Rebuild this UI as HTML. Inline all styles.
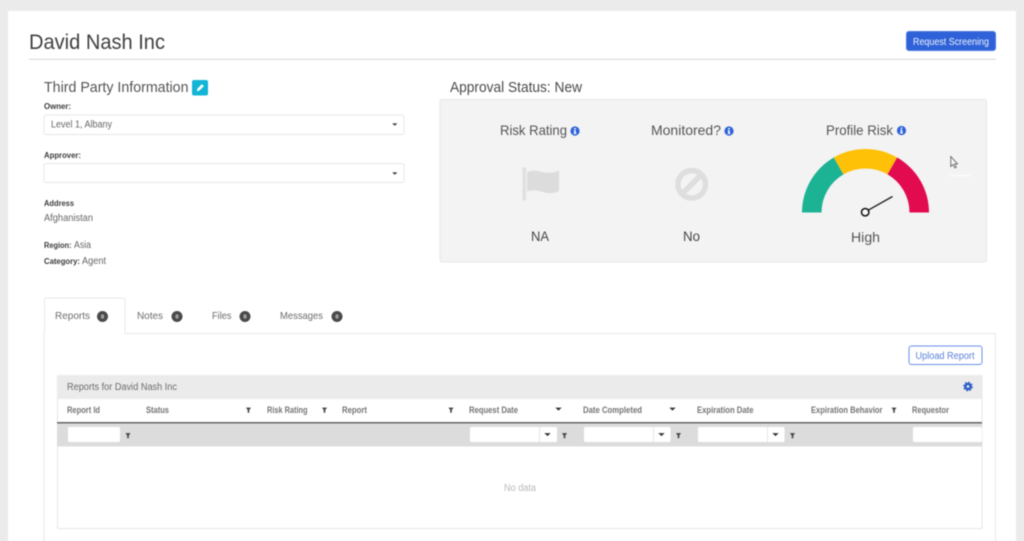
<!DOCTYPE html>
<html><head><meta charset="utf-8"><title>David Nash Inc</title>
<style>
html,body{margin:0;padding:0;width:1024px;height:541px;overflow:hidden;background:#ebebeb}
svg{display:block;filter:blur(.5px)}
text{font-family:"Liberation Sans",sans-serif;fill:#555}
.b{font-weight:bold;fill:#3c3c3c}
.h{font-weight:bold;fill:#747474;font-size:9.2px}
</style></head><body>
<svg width="1024" height="541" viewBox="0 0 1024 541" xmlns="http://www.w3.org/2000/svg">
<defs>
<g id="fn"><path d="M-2.600-2.400H2.600L.8 0V2.800H-.8V0Z" fill="#444"/></g>
<g id="ct"><path d="M-3.200-1.400H3.200L0 1.600Z" fill="#333"/></g>
<g id="inf"><circle r="4.600" fill="#2f62d8"/><rect x="-.8" y="-3" width="1.600" height="1.500" fill="#fff"/><path d="M-1.300-.8H.8V2H1.400V3H-1.400V2H-.8V.1H-1.300Z" fill="#fff"/></g>
<g id="bd"><circle r="5.500" fill="#4a4a4a"/><text y="2" text-anchor="middle" style="font-size:5.500px;fill:#eee;font-weight:bold">0</text></g>
</defs>
<rect width="1024" height="541" fill="#ebebeb"/>
<rect x="8" y="11" width="1008" height="530" fill="#fff"/>

<text x="29" y="49" style="font-size:21px;fill:#404040" textLength="136" lengthAdjust="spacingAndGlyphs">David Nash Inc</text>
<rect x="29" y="58.500" width="967" height="1.500" fill="#e4e4e4"/>
<rect x="906.500" y="31.500" width="89" height="19" rx="2.500" fill="#2f62d8" stroke="#4a78e0"/>
<text x="913" y="45" style="font-size:10px;fill:#eef2fc" textLength="76" lengthAdjust="spacingAndGlyphs">Request Screening</text>

<text x="44" y="92" style="font-size:14.500px" textLength="144.500" lengthAdjust="spacingAndGlyphs">Third Party Information</text>
<rect x="192" y="80" width="16" height="15.500" rx="2" fill="#12b5d6"/>
<path d="M196.800 91.200l.7-2.700 4.400-4.400 2 2-4.400 4.400z" fill="#fff"/>

<text class="b" x="44" y="109" style="font-size:8.700px" textLength="27" lengthAdjust="spacingAndGlyphs">Owner:</text>
<rect x="44" y="115" width="360" height="19.500" rx="2" fill="#fff" stroke="#e6e6e6"/>
<text x="51" y="127.500" style="font-size:10px;fill:#666" textLength="61" lengthAdjust="spacingAndGlyphs">Level 1, Albany</text>
<use href="#ct" transform="translate(394.800 124.500) scale(.8)"/>
<text class="b" x="44" y="158" style="font-size:8.700px" textLength="37" lengthAdjust="spacingAndGlyphs">Approver:</text>
<rect x="44" y="163.500" width="360" height="19" rx="2" fill="#fff" stroke="#e6e6e6"/>
<use href="#ct" transform="translate(394.800 173.500) scale(.8)"/>
<text class="b" x="44" y="206" style="font-size:8.700px" textLength="30" lengthAdjust="spacingAndGlyphs">Address</text>
<text x="44" y="221" style="font-size:10px;fill:#666" textLength="49" lengthAdjust="spacingAndGlyphs">Afghanistan</text>
<text class="b" x="44" y="248" style="font-size:8.700px" textLength="27.500" lengthAdjust="spacingAndGlyphs">Region:</text>
<text x="74" y="248" style="font-size:10px;fill:#666" textLength="17" lengthAdjust="spacingAndGlyphs">Asia</text>
<text class="b" x="44" y="264" style="font-size:8.700px" textLength="36" lengthAdjust="spacingAndGlyphs">Category:</text>
<text x="82" y="264" style="font-size:10px;fill:#666" textLength="24" lengthAdjust="spacingAndGlyphs">Agent</text>

<text x="450" y="92" style="font-size:14.500px;fill:#4a4a4a" textLength="132" lengthAdjust="spacingAndGlyphs">Approval Status: New</text>
<rect x="440" y="99.500" width="546.500" height="162.500" rx="2" fill="#f3f3f3" stroke="#e6e6e6"/>
<text x="500" y="135" style="font-size:14px" textLength="67" lengthAdjust="spacingAndGlyphs">Risk Rating</text>
<use href="#inf" transform="translate(575 131)"/>
<text x="651" y="135" style="font-size:14px" textLength="70" lengthAdjust="spacingAndGlyphs">Monitored?</text>
<use href="#inf" transform="translate(729 131)"/>
<text x="826" y="135" style="font-size:14px" textLength="67" lengthAdjust="spacingAndGlyphs">Profile Risk</text>
<use href="#inf" transform="translate(901.500 130.500)"/>

<rect x="522.500" y="169" width="3.500" height="31.500" rx="1.700" fill="#e0e0e0"/><circle cx="524.200" cy="169.500" r="2.300" fill="#e0e0e0"/>
<path d="M527 172c6-2 10-1.500 15 0s11 1 17-1.200v20.500c-6 2.500-11 2.200-16 .7s-10-2.500-16-.5z" fill="#dcdcdc"/>
<circle cx="691.700" cy="184.300" r="13.800" fill="none" stroke="#dedede" stroke-width="5.400"/>
<path d="M681.700 194.300l20-20" stroke="#dedede" stroke-width="5.400"/>
<text x="531" y="241" style="font-size:14px;fill:#444" textLength="18" lengthAdjust="spacingAndGlyphs">NA</text>
<text x="683" y="241" style="font-size:14px;fill:#444" textLength="17" lengthAdjust="spacingAndGlyphs">No</text>
<text x="851" y="242" style="font-size:14px;fill:#555" textLength="29" lengthAdjust="spacingAndGlyphs">High</text>

<path d="M802 212.500A63.500 63.500 0 0 1 833.800 157.500L843.500 174.400A44 44 0 0 0 821.500 212.500Z" fill="#1bb394"/>
<path d="M833.800 157.500A63.500 63.500 0 0 1 897.200 157.500L887.500 174.400A44 44 0 0 0 843.500 174.400Z" fill="#ffc107"/>
<path d="M897.200 157.500A63.500 63.500 0 0 1 929 212.500H909.500A44 44 0 0 0 887.500 174.400Z" fill="#e30b4f"/>
<path d="M868 210.300L892.500 196.500" stroke="#222" stroke-width="1.400"/>
<circle cx="865.200" cy="212.200" r="3.700" fill="#f7f7f7" stroke="#111" stroke-width="1.500"/>

<path d="M950.800 156.500V166.500L953 164.500L954.800 168L956.300 167.200L954.600 163.900H957.500Z" fill="#f5f5f5" stroke="#555" stroke-width=".8"/>
<rect x="950" y="175" width="20" height="1" fill="#fff"/>

<path d="M44 541V333H44.500V300a2 2 0 0 1 2-2H123a2 2 0 0 1 2 2V333.500H995.500V541" fill="none" stroke="#e8e8e8"/>
<text x="55" y="319" style="font-size:10.300px;fill:#6c6c6c" textLength="35" lengthAdjust="spacingAndGlyphs">Reports</text>
<use href="#bd" transform="translate(102.500 316.500)"/>
<text x="137" y="319" style="font-size:10.300px;fill:#6c6c6c" textLength="26" lengthAdjust="spacingAndGlyphs">Notes</text>
<use href="#bd" transform="translate(177 316.500)"/>
<text x="212" y="319" style="font-size:10.300px;fill:#6c6c6c" textLength="19.500" lengthAdjust="spacingAndGlyphs">Files</text>
<use href="#bd" transform="translate(245 316.500)"/>
<text x="280" y="319" style="font-size:10.300px;fill:#6c6c6c" textLength="43" lengthAdjust="spacingAndGlyphs">Messages</text>
<use href="#bd" transform="translate(337 316.500)"/>

<rect x="909" y="346" width="73" height="18.500" rx="2.500" fill="#fff" stroke="#6a90e6"/>
<text x="915.500" y="359" style="font-size:10px;fill:#5a80d8" textLength="59" lengthAdjust="spacingAndGlyphs">Upload Report</text>

<rect x="57.500" y="375.500" width="924.500" height="153" fill="#fff" stroke="#e6e6e6"/>
<rect x="57" y="375" width="925" height="24" fill="#ebebeb"/>
<text x="67" y="390" style="font-size:9.800px;fill:#6c6c6c" textLength="110" lengthAdjust="spacingAndGlyphs">Reports for David Nash Inc</text>
<circle cx="968" cy="386.500" r="2.600" fill="none" stroke="#2a5cc8" stroke-width="2.400"/>
<circle cx="968" cy="386.500" r="4.100" fill="none" stroke="#2a5cc8" stroke-width="1.400" stroke-dasharray="1.700 1.520"/>

<text class="h" x="67" y="413" textLength="33" lengthAdjust="spacingAndGlyphs">Report Id</text>
<text class="h" x="146" y="413" textLength="23" lengthAdjust="spacingAndGlyphs">Status</text>
<use href="#fn" transform="translate(248.500 410)"/>
<text class="h" x="267" y="413" textLength="40.500" lengthAdjust="spacingAndGlyphs">Risk Rating</text>
<use href="#fn" transform="translate(324.500 410)"/>
<text class="h" x="342" y="413" textLength="25" lengthAdjust="spacingAndGlyphs">Report</text>
<use href="#fn" transform="translate(451 410)"/>
<text class="h" x="469" y="413" textLength="49" lengthAdjust="spacingAndGlyphs">Request Date</text>
<use href="#ct" transform="translate(558.500 409)"/>
<text class="h" x="583" y="413" textLength="59" lengthAdjust="spacingAndGlyphs">Date Completed</text>
<use href="#ct" transform="translate(672.500 409)"/>
<text class="h" x="697" y="413" textLength="56.500" lengthAdjust="spacingAndGlyphs">Expiration Date</text>
<text class="h" x="811" y="413" textLength="71.500" lengthAdjust="spacingAndGlyphs">Expiration Behavior</text>
<use href="#fn" transform="translate(894 410)"/>
<text class="h" x="912" y="413" textLength="37" lengthAdjust="spacingAndGlyphs">Requestor</text>

<rect x="57" y="422" width="925" height="1.500" fill="#666"/>
<rect x="57" y="423.500" width="925" height="23" fill="#dcdcdc"/>
<rect x="68" y="427" width="52" height="15" rx="1.500" fill="#fff"/>
<use href="#fn" transform="translate(128 435.500)"/>
<rect x="470" y="427" width="87" height="15" rx="1.500" fill="#fff"/><rect x="539" y="427" width="1" height="15" fill="#e6e6e6"/>
<use href="#ct" transform="translate(547.500 434.500)"/><use href="#fn" transform="translate(564.500 435.500)"/>
<rect x="584" y="427" width="86.500" height="15" rx="1.500" fill="#fff"/><rect x="653" y="427" width="1" height="15" fill="#e6e6e6"/>
<use href="#ct" transform="translate(661.500 434.500)"/><use href="#fn" transform="translate(678.500 435.500)"/>
<rect x="698" y="427" width="86.500" height="15" rx="1.500" fill="#fff"/><rect x="767" y="427" width="1" height="15" fill="#e6e6e6"/>
<use href="#ct" transform="translate(775.500 434.500)"/><use href="#fn" transform="translate(792.500 435.500)"/>
<rect x="913" y="427" width="69" height="15" rx="1.500" fill="#fff"/>

<text x="504" y="491" style="font-size:10px;fill:#b8b8b8" textLength="32" lengthAdjust="spacingAndGlyphs">No data</text>
</svg>
</body></html>
